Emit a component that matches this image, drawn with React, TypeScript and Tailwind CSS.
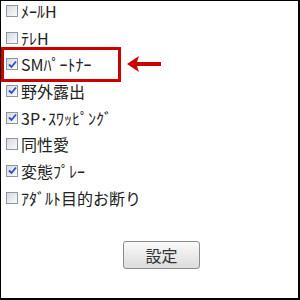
import React from "react"

const items = [
  { label: "ﾒｰﾙH", checked: false },
  { label: "ﾃﾚH", checked: false },
  { label: "SMﾊﾟｰﾄﾅｰ", checked: true },
  { label: "野外露出", checked: true },
  { label: "3P･ｽﾜｯﾋﾟﾝｸﾞ", checked: true },
  { label: "同性愛", checked: false },
  { label: "変態ﾌﾟﾚｰ", checked: true },
  { label: "ｱﾀﾞﾙﾄ目的お断り", checked: false },
]

function Box({ checked }: { checked: boolean }) {
  return (
    <span className="flex h-[12px] w-[12px] shrink-0 items-center justify-center border border-[#8a97a6] bg-gradient-to-br from-[#d6d9dd] to-[#fbfbfb]">
      {checked && (
        <svg width="9" height="9" viewBox="0 0 9 9">
          <path d="M1 4.5 L3.5 7 L8 1.5" fill="none" stroke="#2a4fc9" strokeWidth="1.8" />
        </svg>
      )}
    </span>
  )
}

export default function App() {
  return (
    <div className="relative flex h-[300px] w-[300px] flex-col overflow-hidden border-t border-l border-r-2 border-b-2 border-black bg-white font-['Noto_Sans_CJK_JP',sans-serif] text-[16px] text-[#222]">
      <div className="flex flex-col gap-[6.67px] pl-[5px]">
        {items.map((it) => (
          <div key={it.label} className="flex h-[20px] items-center gap-[3px] leading-[20px]">
            <Box checked={it.checked} />
            <span>{it.label}</span>
          </div>
        ))}
      </div>

      <div className="mt-[33px] pl-[122px]">
        <button className="h-[28px] w-[77px] rounded-[3px] border border-[#8c8c8c] bg-gradient-to-b from-[#fafafa] to-[#dcdcdc] text-[16px] text-[#333]">
          設定
        </button>
      </div>

      {/* highlight box and arrow */}
      <div className="absolute left-0 top-[46px] h-[35px] w-[120px] border-[3px] border-[#cc0000]" />
      <svg className="absolute left-[126px] top-[55px]" width="36" height="16" viewBox="0 0 36 16">
        <path d="M0 8 L12 0 L10 6 L34 6 L34 10 L10 10 L12 16 Z" fill="#cc0000" />
      </svg>
    </div>
  )
}
